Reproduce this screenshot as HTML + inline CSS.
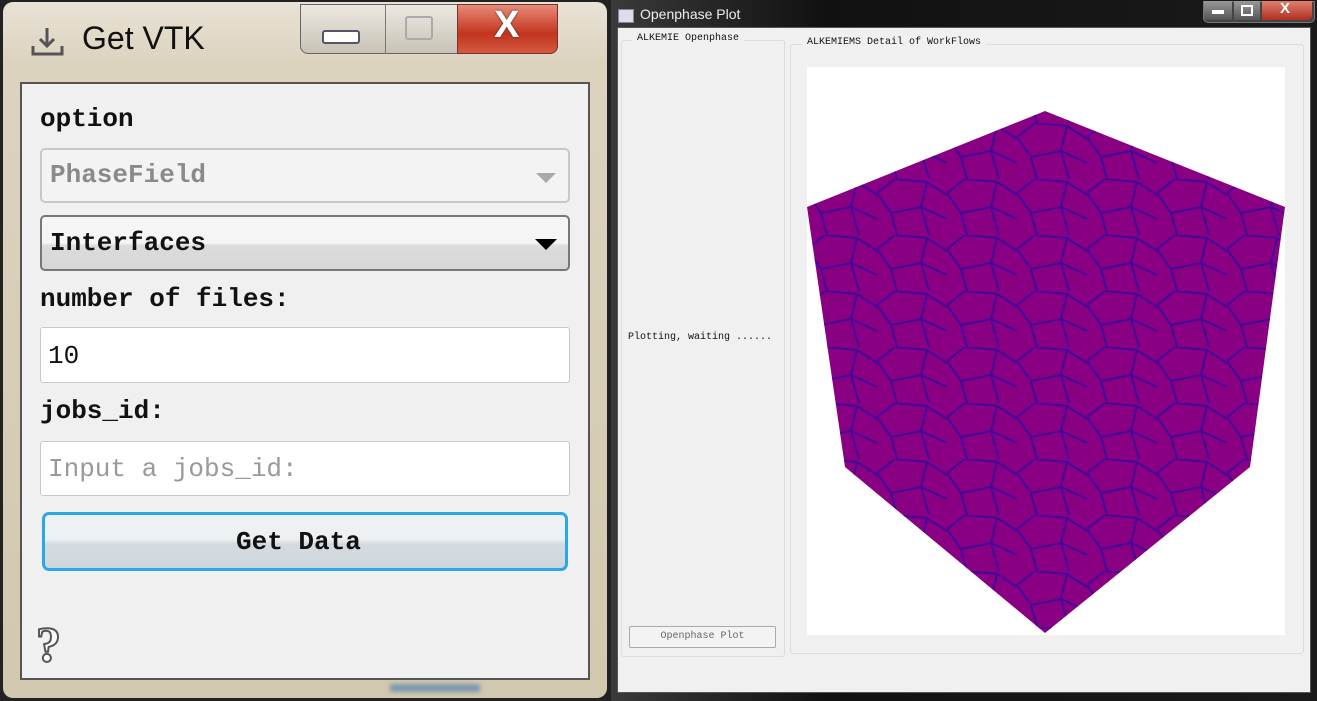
<!DOCTYPE html>
<html><head><style>
body{margin:0;width:1317px;height:701px;overflow:hidden;background:#fff;position:relative;font-family:"Liberation Mono","Noto Sans CJK SC",monospace}
.a{position:absolute}
.lbl{font-size:26px;font-weight:bold;color:#111;font-family:"Liberation Mono","Noto Serif CJK SC",monospace}
.box{position:absolute;border-radius:5px;box-sizing:border-box}
</style></head><body>
<div class="a" style="left:0;top:0;width:611px;height:701px;background:#222;"></div>
<div class="a" style="left:3px;top:2px;width:604px;height:696px;border-radius:10px;background:linear-gradient(180deg,#e9e3d6 0,#dcd3bf 60px,#d2c8af 100%);"></div>
<div class="a" style="left:30px;top:24px;width:36px;height:36px">
<svg width="36" height="36"><path d="M17 4v18M10 15l7 7 7-7" stroke="#555" stroke-width="3" fill="none"/><path d="M3 22v8h29v-8" stroke="#555" stroke-width="3" fill="none"/></svg></div>
<div class="a" style="left:82px;top:20px;font:32px 'Liberation Sans',sans-serif;color:#111">Get VTK</div>
<div class="a" style="left:300px;top:4px;width:258px;height:50px;border:1px solid #666;border-radius:0 0 8px 8px;background:linear-gradient(#ece9e2,#c9c3b6);box-sizing:border-box"></div>
<div class="a" style="left:385px;top:4px;width:1px;height:50px;background:#777"></div>
<div class="a" style="left:322px;top:30px;width:34px;height:10px;background:#fff;border:2px solid #556;border-radius:3px"></div>
<div class="a" style="left:405px;top:16px;width:24px;height:20px;border:2px solid #aaa;border-radius:3px"></div>
<div class="a" style="left:457px;top:4px;width:101px;height:50px;background:linear-gradient(#e88a78,#c2341e 60%,#d45a40);border-radius:0 0 8px 0;border:1px solid #733;box-sizing:border-box"></div>
<div class="a" style="left:494px;top:4px;font:bold 38px 'Liberation Sans',sans-serif;color:#fff;text-shadow:0 0 2px #333">X</div>
<div class="a" style="left:20px;top:82px;width:570px;height:598px;background:#f0f0f0;border:2px solid #555;box-sizing:border-box"></div>
<div class="a lbl" style="left:40px;top:104px">option</div>
<div class="box" style="left:40px;top:148px;width:530px;height:55px;border:2px solid #c8c8c8;background:#f3f3f3"></div>
<div class="a" style="left:50px;top:160px;font-size:26px;color:#8a8a8a;font-weight:bold">PhaseField</div>
<div class="a" style="left:536px;top:173px;border-left:10px solid transparent;border-right:10px solid transparent;border-top:10px solid #aaa"></div>
<div class="box" style="left:40px;top:215px;width:530px;height:56px;border:2px solid #777;background:linear-gradient(#f5f5f5 50%,#dcdcdc 55%,#d6d6d6)"></div>
<div class="a lbl" style="left:50px;top:228px">Interfaces</div>
<div class="a" style="left:535px;top:239px;border-left:11px solid transparent;border-right:11px solid transparent;border-top:11px solid #000"></div>
<div class="a lbl" style="left:40px;top:284px">number of files:</div>
<div class="box" style="left:40px;top:327px;width:530px;height:56px;border:1px solid #c8c8c8;background:#fff;border-radius:3px"></div>
<div class="a" style="left:48px;top:341px;font-size:26px;color:#111">10</div>
<div class="a lbl" style="left:40px;top:396px">jobs_id:</div>
<div class="box" style="left:40px;top:441px;width:530px;height:55px;border:1px solid #c8c8c8;background:#fff;border-radius:3px"></div>
<div class="a" style="left:48px;top:454px;font-size:26px;color:#999">Input a jobs_id:</div>
<div class="box" style="left:42px;top:512px;width:526px;height:59px;border:3px solid #2aa7e6;background:linear-gradient(#eef1f3 45%,#d3dae0 55%,#cfd6dc);border-radius:7px"></div>
<div class="a lbl" style="left:236px;top:527px">Get Data</div>
<div class="a" style="left:36px;top:615px;font:bold 50px 'Liberation Serif',serif;color:#fff;-webkit-text-stroke:2px #555">?</div>
<div class="a" style="left:390px;top:684px;width:90px;height:8px;background:#7d98ad;filter:blur(2px)"></div>
<div class="a" style="left:611px;top:0;width:706px;height:701px;background:linear-gradient(90deg,#3a3a3a,#111 30%,#1a1a1a)"></div>
<div class="a" style="left:618px;top:9px;width:14px;height:12px;background:#dde;border:1px solid #888"></div>
<div class="a" style="left:640px;top:6px;font:14px 'Liberation Sans',sans-serif;color:#eee">Openphase Plot</div>
<div class="a" style="left:1203px;top:1px;width:110px;height:20px;border:1px solid #777;border-radius:0 0 5px 5px;background:#444"></div>
<div class="a" style="left:1204px;top:1px;width:28px;height:19px;background:linear-gradient(#999,#555)"></div>
<div class="a" style="left:1234px;top:1px;width:26px;height:19px;background:linear-gradient(#999,#555)"></div>
<div class="a" style="left:1262px;top:1px;width:50px;height:19px;background:linear-gradient(#e08070,#b03020);border-radius:0 0 5px 0"></div>
<div class="a" style="left:1280px;top:0;font:bold 15px 'Liberation Sans',sans-serif;color:#fff">X</div>
<div class="a" style="left:1212px;top:10px;width:12px;height:4px;background:#fff"></div>
<div class="a" style="left:1241px;top:5px;width:8px;height:7px;border:2px solid #fff"></div>
<div class="a" style="left:617px;top:27px;width:694px;height:666px;background:#f0f0f0;border:1px solid #555;box-sizing:border-box"></div>
<div class="a" style="left:621px;top:40px;width:162px;height:615px;border:1px solid #dcdcdc;border-radius:3px"></div>
<div class="a" style="left:632px;top:33px;padding:0 5px;background:#f0f0f0;font-size:10px;color:#111">ALKEMIE Openphase</div>
<div class="a" style="left:628px;top:332px;font-size:10px;color:#111">Plotting, waiting ......</div>
<div class="a" style="left:629px;top:626px;width:145px;height:20px;border:1px solid #aaa;border-radius:2px;background:#f3f3f3;font-size:10px;color:#666;text-align:center;line-height:20px">Openphase Plot</div>
<div class="a" style="left:790px;top:44px;width:512px;height:608px;border:1px solid #dcdcdc;border-radius:3px"></div>
<div class="a" style="left:802px;top:37px;padding:0 5px;background:#f0f0f0;font-size:10px;color:#111">ALKEMIEMS Detail of WorkFlows</div>
<div class="a" style="left:807px;top:67px;width:478px;height:568px;background:#fff"></div>
<svg class="a" style="left:807px;top:67px" width="478" height="568">
<defs>
<pattern id="p" width="70" height="56" patternUnits="userSpaceOnUse">
<path d="M0 14L18 0M18 0L50 3L70 16M50 3L44 28L14 34L0 14M44 28L70 40M14 34L20 56M44 28L52 56" stroke="#2a0aa0" stroke-width="2" fill="none"/>
</pattern>
</defs>
<polygon points="238,44 478,140 443,400 238,566 38,400 0,140" fill="#8a0082"/>
<polygon points="238,44 478,140 443,400 238,566 38,400 0,140" fill="url(#p)" opacity="0.75"/>
</svg>
</body></html>
